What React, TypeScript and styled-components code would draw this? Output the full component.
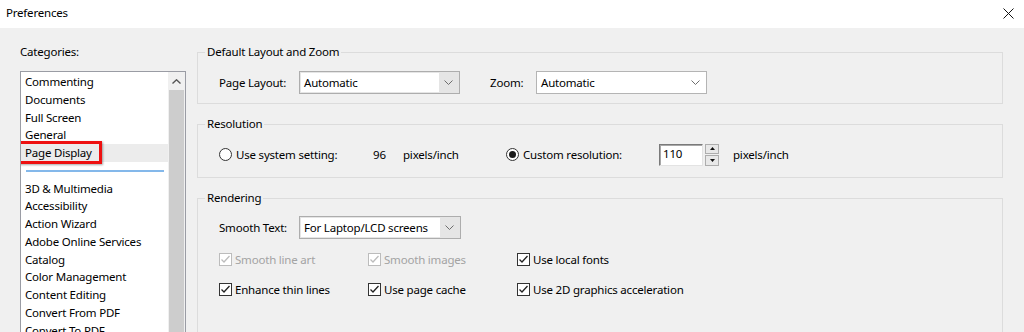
import React from 'react'
import styled, { createGlobalStyle } from 'styled-components'

const GlobalStyle = createGlobalStyle`
  html, body {
    margin: 0;
    padding: 0;
    background: #f0f0f0;
    overflow: hidden;
  }
  body {
    font-family: "Noto Sans", "Open Sans", sans-serif;
    font-size: 11.5px;
    letter-spacing: -0.2px;
    color: #000;
  }
`

const Window = styled.div`
  width: 1024px;
  height: 332px;
  overflow: hidden;
  background: #f0f0f0;
  display: flex;
  flex-direction: column;
`

const TitleBar = styled.div`
  height: 28px;
  box-sizing: border-box;
  padding: 0 10px 3px 6px;
  background: #fff;
  display: flex;
  align-items: center;
  justify-content: space-between;
  line-height: 16px;
`

const CloseIcon = styled.svg`
  width: 11px;
  height: 11px;
  margin-top: 2px;
`

const Body = styled.div`
  flex: 1;
  display: flex;
  gap: 11px;
  padding: 16px 0 0 20px;
  overflow: hidden;
`

const LeftColumn = styled.div`
  width: 166px;
  display: flex;
  flex-direction: column;
`

const Caption = styled.div`
  line-height: 16px;
`

const ListBox = styled.div`
  margin-top: 11px;
  flex: 1;
  display: flex;
  border: 1px solid #9a9ca4;
  border-bottom: none;
  background: #fff;
  overflow: hidden;
`

const Items = styled.div`
  flex: 1;
  padding-top: 1px;
`

const Item = styled.div<{ $selected?: boolean }>`
  position: relative;
  height: 17.75px;
  line-height: 18.5px;
  padding-left: 4px;
  white-space: nowrap;
  background: ${p => (p.$selected ? '#ececec' : 'transparent')};
`

const Callout = styled.span`
  position: absolute;
  left: -3px;
  top: -3px;
  width: 84px;
  height: 23px;
  box-sizing: border-box;
  border: 3px solid #ee1111;
  box-shadow: 1px 1px 2px rgba(0, 0, 0, 0.35);
  pointer-events: none;
`

const Separator = styled.div`
  height: 17.75px;
  display: flex;
  align-items: center;
  padding: 1px 4px 0 5px;
  box-sizing: border-box;
  &::after {
    content: '';
    flex: 1;
    height: 2px;
    background: #84b8ea;
  }
`

const ScrollBar = styled.div`
  width: 17px;
  background: #f0f0f0;
  display: flex;
  flex-direction: column;
  align-items: center;
`

const ScrollArrow = styled.div`
  height: 18px;
  width: 100%;
  display: flex;
  align-items: center;
  justify-content: center;
`

const Thumb = styled.div`
  flex: 1;
  width: 15px;
  background: #cdcdcd;
`

const RightColumn = styled.div`
  width: 806px;
  display: flex;
  flex-direction: column;
  gap: 12px;
`

const Group = styled.fieldset`
  margin: 0;
  padding: 0;
  min-inline-size: 0;
  border: 1px solid #dcdcdc;
`

const Legend = styled.legend`
  margin-left: 7px;
  padding: 0 2px;
  line-height: 16px;
`

const GroupBody = styled.div<{ $pt: number; $pb: number }>`
  padding: ${p => p.$pt}px 0 ${p => p.$pb}px 21px;
  display: flex;
  flex-direction: column;
`

const Row = styled.div<{ $gap?: number }>`
  display: flex;
  align-items: center;
  height: ${p => (p.$gap !== undefined ? 18 : 23)}px;
  margin-top: ${p => p.$gap ?? 0}px;
`

const Label = styled.span<{ $w?: number; $disabled?: boolean }>`
  flex: none;
  width: ${p => (p.$w ? `${p.$w}px` : 'auto')};
  white-space: nowrap;
  color: ${p => (p.$disabled ? '#a3a3a3' : '#000')};
`

const Combo = styled.div<{ $w: number; $white?: boolean }>`
  flex: none;
  width: ${p => p.$w}px;
  height: 23px;
  box-sizing: border-box;
  border: 1px solid ${p => (p.$white ? '#b4b4b4' : '#adadad')};
  background: ${p => (p.$white ? '#fff' : '#e5e5e5')};
  padding: 1px;
  display: flex;
`

const ComboField = styled.div`
  flex: 1;
  background: #fff;
  padding-left: 3px;
  line-height: 19px;
`

const ComboArrow = styled.div`
  width: 19px;
  display: flex;
  align-items: center;
  justify-content: center;
`

const Radio = styled.span<{ $on?: boolean }>`
  flex: none;
  width: 13px;
  height: 13px;
  box-sizing: border-box;
  border: 1px solid #333;
  border-radius: 50%;
  background: #fff;
  margin-right: 4px;
  display: flex;
  align-items: center;
  justify-content: center;
  &::after {
    content: '';
    width: 7px;
    height: 7px;
    border-radius: 50%;
    background: ${p => (p.$on ? '#1a1a1a' : 'transparent')};
  }
`

const Option = styled.div<{ $w: number }>`
  flex: none;
  width: ${p => p.$w}px;
  display: flex;
  align-items: center;
`

const SpinInput = styled.div`
  flex: none;
  width: 44px;
  height: 22px;
  box-sizing: border-box;
  border: 1px solid;
  border-color: #7a7a7a #e3e3e3 #e3e3e3 #7a7a7a;
  box-shadow: inset 1px 1px 0 #a8a8a8;
  background: #fff;
  padding-left: 3px;
  line-height: 18px;
`

const SpinButtons = styled.div`
  flex: none;
  width: 14px;
  height: 22px;
  margin: 0 14px 0 2px;
  display: flex;
  flex-direction: column;
  gap: 1px;
`

const SpinButton = styled.div`
  flex: 1;
  border: 1px solid #adadad;
  background: #e8e8e8;
  display: flex;
  align-items: center;
  justify-content: center;
`

const Check = styled.span<{ $disabled?: boolean }>`
  flex: none;
  width: 13px;
  height: 13px;
  box-sizing: border-box;
  border: 1px solid ${p => (p.$disabled ? '#bcbcbc' : '#333')};
  background: #fff;
  margin-right: 3px;
  display: flex;
`

const Chevron = () => (
  <svg width="9" height="5" viewBox="0 0 9 5">
    <path d="M0.5 0.5 L4.5 4.5 L8.5 0.5" fill="none" stroke="#6d6d6d" strokeWidth="1" />
  </svg>
)

const CheckBox = ({ label, disabled, w }: { label: string; disabled?: boolean; w: number }) => (
  <Option $w={w}>
    <Check $disabled={disabled}>
      <svg width="11" height="11" viewBox="0 0 11 11">
        <path
          d="M1.5 5.5 L4 8 L9.5 2"
          fill="none"
          stroke={disabled ? '#bcbcbc' : '#222'}
          strokeWidth="1.3"
        />
      </svg>
    </Check>
    <Label $disabled={disabled}>{label}</Label>
  </Option>
)

const topCategories = ['Commenting', 'Documents', 'Full Screen', 'General']
const moreCategories = [
  '3D & Multimedia',
  'Accessibility',
  'Action Wizard',
  'Adobe Online Services',
  'Catalog',
  'Color Management',
  'Content Editing',
  'Convert From PDF',
  'Convert To PDF',
]

export default function App() {
  return (
    <Window>
      <GlobalStyle />
      <TitleBar>
        <span>Preferences</span>
        <CloseIcon viewBox="0 0 11 11">
          <path d="M0.5 0.5 L10.5 10.5 M10.5 0.5 L0.5 10.5" stroke="#111" strokeWidth="1" />
        </CloseIcon>
      </TitleBar>
      <Body>
        <LeftColumn>
          <Caption>Categories:</Caption>
          <ListBox>
            <Items>
              {topCategories.map(c => (
                <Item key={c}>{c}</Item>
              ))}
              <Item $selected>
                Page Display
                <Callout />
              </Item>
              <Separator />
              {moreCategories.map(c => (
                <Item key={c}>{c}</Item>
              ))}
            </Items>
            <ScrollBar>
              <ScrollArrow>
                <svg width="9" height="5" viewBox="0 0 9 5">
                  <path d="M0.5 4.5 L4.5 0.8 L8.5 4.5" fill="none" stroke="#555" strokeWidth="1.4" />
                </svg>
              </ScrollArrow>
              <Thumb />
            </ScrollBar>
          </ListBox>
        </LeftColumn>

        <RightColumn>
          <Group>
            <Legend>Default Layout and Zoom</Legend>
            <GroupBody $pt={11} $pb={9}>
              <Row>
                <Label $w={80}>Page Layout:</Label>
                <Combo $w={161}>
                  <ComboField>Automatic</ComboField>
                  <ComboArrow>
                    <Chevron />
                  </ComboArrow>
                </Combo>
                <Label $w={46} style={{ marginLeft: 30 }}>
                  Zoom:
                </Label>
                <Combo $w={171} $white>
                  <ComboField>Automatic</ComboField>
                  <ComboArrow>
                    <Chevron />
                  </ComboArrow>
                </Combo>
              </Row>
            </GroupBody>
          </Group>

          <Group>
            <Legend>Resolution</Legend>
            <GroupBody $pt={11} $pb={11}>
              <Row>
                <Option $w={154}>
                  <Radio />
                  <Label>Use system setting:</Label>
                </Option>
                <Label $w={30}>96</Label>
                <Label $w={103}>pixels/inch</Label>
                <Option $w={153}>
                  <Radio $on />
                  <Label>Custom resolution:</Label>
                </Option>
                <SpinInput>110</SpinInput>
                <SpinButtons>
                  <SpinButton>
                    <svg width="5" height="3" viewBox="0 0 5 3">
                      <path d="M0 3 L2.5 0 L5 3 Z" fill="#111" />
                    </svg>
                  </SpinButton>
                  <SpinButton>
                    <svg width="5" height="3" viewBox="0 0 5 3">
                      <path d="M0 0 L2.5 3 L5 0 Z" fill="#111" />
                    </svg>
                  </SpinButton>
                </SpinButtons>
                <Label>pixels/inch</Label>
              </Row>
            </GroupBody>
          </Group>

          <Group>
            <Legend>Rendering</Legend>
            <GroupBody $pt={10} $pb={60}>
              <Row>
                <Label $w={80}>Smooth Text:</Label>
                <Combo $w={162}>
                  <ComboField>For Laptop/LCD screens</ComboField>
                  <ComboArrow>
                    <Chevron />
                  </ComboArrow>
                </Combo>
              </Row>
              <Row $gap={11}>
                <CheckBox w={149} label="Smooth line art" disabled />
                <CheckBox w={149} label="Smooth images" disabled />
                <CheckBox w={200} label="Use local fonts" />
              </Row>
              <Row $gap={12}>
                <CheckBox w={149} label="Enhance thin lines" />
                <CheckBox w={149} label="Use page cache" />
                <CheckBox w={200} label="Use 2D graphics acceleration" />
              </Row>
            </GroupBody>
          </Group>
        </RightColumn>
      </Body>
    </Window>
  )
}
